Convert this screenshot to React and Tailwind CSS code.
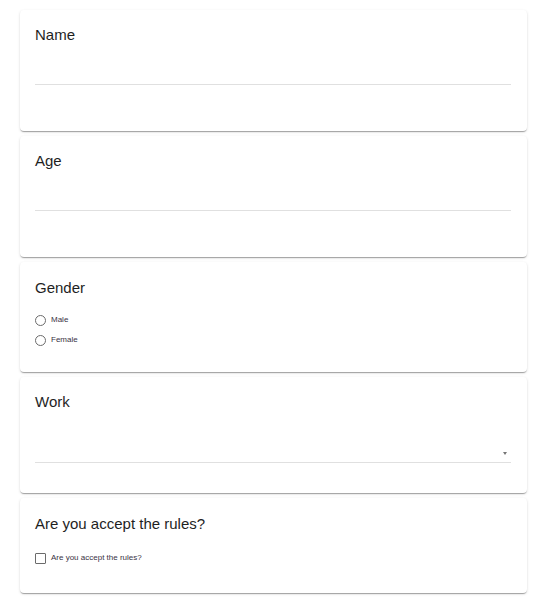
import React from 'react';

const card =
  'relative bg-white rounded-[4px] px-[15px] pr-[16px] shadow-[0_2px_1px_-1px_rgba(0,0,0,0.2),0_1px_1px_0_rgba(0,0,0,0.14),0_1px_3px_0_rgba(0,0,0,0.12)]';

const Title = ({ children }) => (
  <div className="text-[15px] leading-[18px] text-[#1f1f1f]">{children}</div>
);

const Radio = ({ label }) => (
  <label className="flex items-center h-[20px]">
    <span className="w-[11px] h-[11px] rounded-full border-[1.5px] border-[#6b6b6b]" />
    <span className="ml-[5px] text-[8px] text-[#3a3344]">{label}</span>
  </label>
);

export default function App() {
  return (
    <div className="min-h-screen bg-white pt-[10px] pl-[20px] font-['Liberation_Sans',Arial,sans-serif]">
      <div className="w-[507px] flex flex-col gap-[5px]">
        <div className={`${card} h-[121px] pt-[16px]`}>
          <Title>Name</Title>
          <div className="mt-[19px] h-[22px] border-b border-[#e0e0e0]" />
        </div>

        <div className={`${card} h-[121px] pt-[16px]`}>
          <Title>Age</Title>
          <div className="mt-[19px] h-[22px] border-b border-[#e0e0e0]" />
        </div>

        <div className={`${card} h-[110px] pt-[17px]`}>
          <Title>Gender</Title>
          <div className="mt-[13px] flex flex-col">
            <Radio label="Male" />
            <Radio label="Female" />
          </div>
        </div>

        <div className={`${card} h-[116px] pt-[16px]`}>
          <Title>Work</Title>
          <div className="relative mt-[19px] h-[33px] border-b border-[#e0e0e0]">
            <span className="absolute right-[4px] bottom-[7px] w-0 h-0 border-l-[2.5px] border-r-[2.5px] border-t-[3px] border-l-transparent border-r-transparent border-t-[#757575]" />
          </div>
        </div>

        <div className={`${card} h-[95px] pt-[17px]`}>
          <Title>Are you accept the rules?</Title>
          <label className="mt-[15px] flex items-center h-[20px]">
            <span className="w-[11px] h-[11px] rounded-[1px] border-[1.5px] border-[#6b6b6b]" />
            <span className="ml-[5px] text-[8px] text-[#3a3344]">Are you accept the rules?</span>
          </label>
        </div>
      </div>
    </div>
  );
}
